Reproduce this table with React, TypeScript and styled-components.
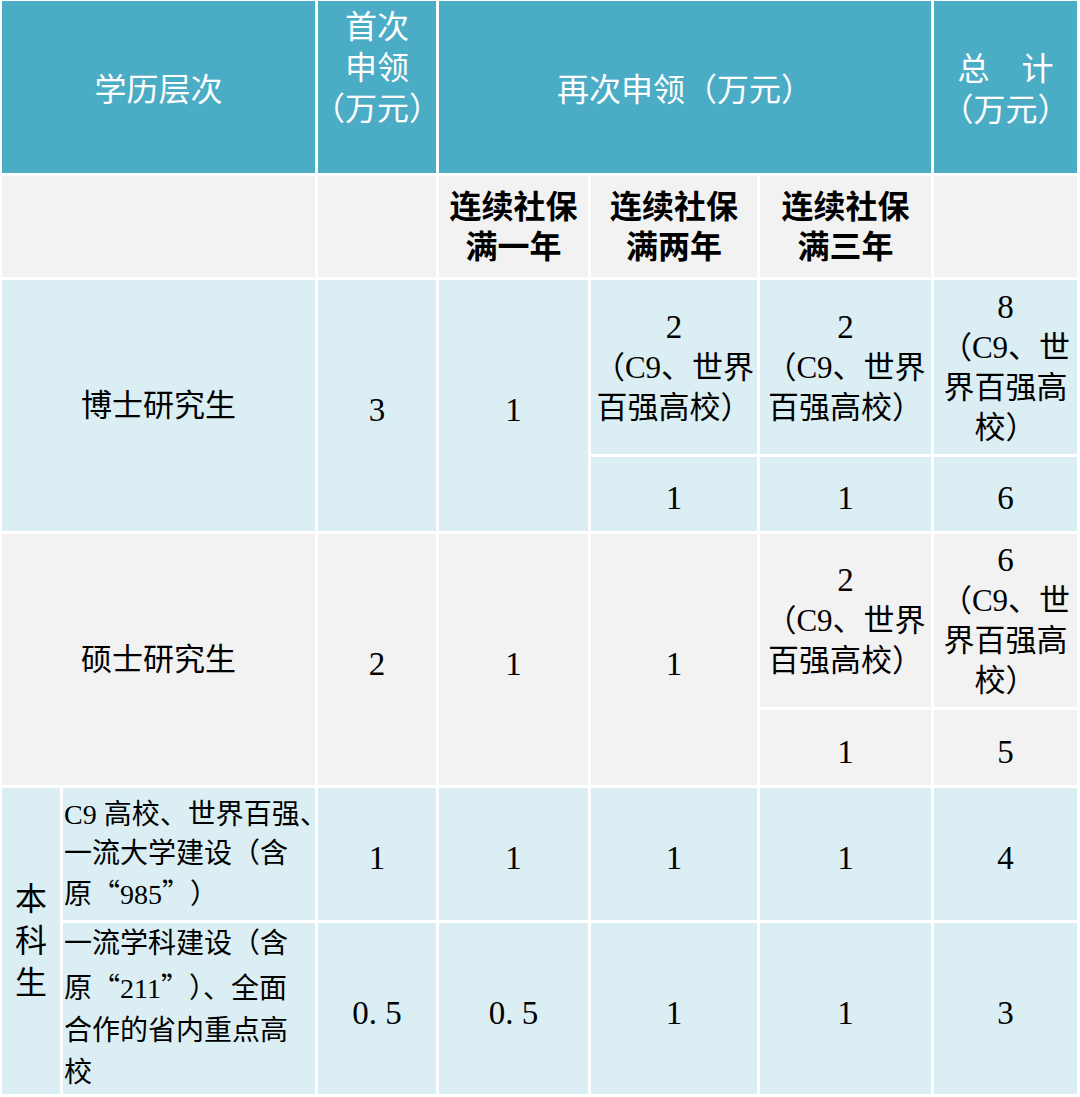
import React from "react";
import styled, { createGlobalStyle } from "styled-components";

const Global = createGlobalStyle`
  html, body { margin: 0; padding: 0; background: #fff; }
  body { font-family: "Liberation Serif", "Noto Sans CJK SC", serif; }
`;

type Tone = "head" | "blue" | "gray";

const bg: Record<Tone, string> = {
  head: "#4BACC6",
  blue: "#DAEEF3",
  gray: "#F2F2F2",
};

const Table = styled.div`
  display: grid;
  grid-template-columns: 58px 252px 118px 149px 166px 171px 143px;
  grid-template-rows: 172px 101px 174px 74px 173px 75px 132px 171px;
  gap: 3px;
  padding: 1px 3px 3px 2px;
  width: 1080px;
  height: 1097px;
  box-sizing: border-box;
  background: #ffffff;
`;

const Cell = styled.div<{ $tone: Tone; $c: string; $r: string; $top?: number }>`
  grid-column: ${(p) => p.$c};
  grid-row: ${(p) => p.$r};
  background: ${(p) => bg[p.$tone]};
  display: flex;
  align-items: ${(p) => (p.$top !== undefined ? "flex-start" : "center")};
  justify-content: center;
  padding-top: ${(p) => p.$top ?? 0}px;
  box-sizing: border-box;
  overflow: visible;
  min-width: 0;
`;

const HeadText = styled.div`
  font-family: "Noto Sans CJK SC", sans-serif;
  font-size: 32px;
  line-height: 41px;
  color: #ffffff;
  text-align: center;
  white-space: nowrap;
`;

const Label = styled.div<{ $bold?: boolean; $size?: number; $lh?: number }>`
  font-family: "Liberation Serif", "Noto Sans CJK SC", serif;
  font-size: ${(p) => p.$size ?? 31}px;
  font-weight: ${(p) => (p.$bold ? 700 : 400)};
  line-height: ${(p) => p.$lh ?? 40}px;
  color: #000;
  text-align: center;
  white-space: nowrap;
`;

const Num = styled.div`
  font-family: "Liberation Serif", serif;
  font-size: 33px;
  line-height: 40px;
  padding-top: 8px;
  color: #000;
  white-space: pre;
`;

const Big = styled.span`
  font-family: "Liberation Serif", serif;
  font-size: 33px;
`;

const SideCell = styled(Cell)`
  justify-content: flex-start;
  padding-left: 1px;
`;

const SideText = styled.div<{ $lh: number }>`
  font-family: "Liberation Serif", "Noto Sans CJK SC", serif;
  font-size: 28px;
  line-height: ${(p) => p.$lh}px;
  color: #000;
  white-space: nowrap;
`;

const Quote = styled.span`
  font-family: "Noto Sans CJK SC", sans-serif;
  display: inline-block;
  width: 1em;
  text-align: center;
`;

const Lines: React.FC<{ lines: React.ReactNode[] }> = ({ lines }) => (
  <>
    {lines.map((l, i) => (
      <React.Fragment key={i}>
        {i > 0 && <br />}
        {l}
      </React.Fragment>
    ))}
  </>
);

const c9Two = [<Big key="n">2</Big>, "（C9、世界", "百强高校）"];
const c9Total = (n: string) => [<Big key="n">{n}</Big>, "（C9、世", "界百强高", "校）"];

export default function App() {
  return (
    <>
      <Global />
      <Table>
        {/* header */}
        <Cell $tone="head" $c="1 / 3" $r="1">
          <HeadText>学历层次</HeadText>
        </Cell>
        <Cell $tone="head" $c="3" $r="1" $top={3}>
          <HeadText>
            <Lines lines={["首次", "申领", "（万元）"]} />
          </HeadText>
        </Cell>
        <Cell $tone="head" $c="4 / 7" $r="1">
          <HeadText>再次申领（万元）</HeadText>
        </Cell>
        <Cell $tone="head" $c="7" $r="1">
          <HeadText>
            <Lines lines={["总\u3000计", "（万元）"]} />
          </HeadText>
        </Cell>

        {/* sub header */}
        <Cell $tone="gray" $c="1 / 3" $r="2" />
        <Cell $tone="gray" $c="3" $r="2" />
        <Cell $tone="gray" $c="4" $r="2">
          <Label $bold $size={32}>
            <Lines lines={["连续社保", "满一年"]} />
          </Label>
        </Cell>
        <Cell $tone="gray" $c="5" $r="2">
          <Label $bold $size={32}>
            <Lines lines={["连续社保", "满两年"]} />
          </Label>
        </Cell>
        <Cell $tone="gray" $c="6" $r="2">
          <Label $bold $size={32}>
            <Lines lines={["连续社保", "满三年"]} />
          </Label>
        </Cell>
        <Cell $tone="gray" $c="7" $r="2" />

        {/* 博士 */}
        <Cell $tone="blue" $c="1 / 3" $r="3 / 5">
          <Label>博士研究生</Label>
        </Cell>
        <Cell $tone="blue" $c="3" $r="3 / 5">
          <Num>3</Num>
        </Cell>
        <Cell $tone="blue" $c="4" $r="3 / 5">
          <Num>1</Num>
        </Cell>
        <Cell $tone="blue" $c="5" $r="3">
          <Label>
            <Lines lines={c9Two} />
          </Label>
        </Cell>
        <Cell $tone="blue" $c="6" $r="3">
          <Label>
            <Lines lines={c9Two} />
          </Label>
        </Cell>
        <Cell $tone="blue" $c="7" $r="3">
          <Label>
            <Lines lines={c9Total("8")} />
          </Label>
        </Cell>
        <Cell $tone="blue" $c="5" $r="4">
          <Num>1</Num>
        </Cell>
        <Cell $tone="blue" $c="6" $r="4">
          <Num>1</Num>
        </Cell>
        <Cell $tone="blue" $c="7" $r="4">
          <Num>6</Num>
        </Cell>

        {/* 硕士 */}
        <Cell $tone="gray" $c="1 / 3" $r="5 / 7">
          <Label>硕士研究生</Label>
        </Cell>
        <Cell $tone="gray" $c="3" $r="5 / 7">
          <Num>2</Num>
        </Cell>
        <Cell $tone="gray" $c="4" $r="5 / 7">
          <Num>1</Num>
        </Cell>
        <Cell $tone="gray" $c="5" $r="5 / 7">
          <Num>1</Num>
        </Cell>
        <Cell $tone="gray" $c="6" $r="5">
          <Label>
            <Lines lines={c9Two} />
          </Label>
        </Cell>
        <Cell $tone="gray" $c="7" $r="5">
          <Label>
            <Lines lines={c9Total("6")} />
          </Label>
        </Cell>
        <Cell $tone="gray" $c="6" $r="6">
          <Num>1</Num>
        </Cell>
        <Cell $tone="gray" $c="7" $r="6">
          <Num>5</Num>
        </Cell>

        {/* 本科 */}
        <Cell $tone="blue" $c="1" $r="7 / 9">
          <Label $size={32} $lh={42}>
            <Lines lines={["本", "科", "生"]} />
          </Label>
        </Cell>
        <SideCell $tone="blue" $c="2" $r="7">
          <SideText $lh={39}>
            <Lines
              lines={[
                "C9 高校、世界百强、",
                "一流大学建设（含",
                <>
                  原<Quote>“</Quote>985<Quote>”</Quote>）
                </>,
              ]}
            />
          </SideText>
        </SideCell>
        <Cell $tone="blue" $c="3" $r="7">
          <Num>1</Num>
        </Cell>
        <Cell $tone="blue" $c="4" $r="7">
          <Num>1</Num>
        </Cell>
        <Cell $tone="blue" $c="5" $r="7">
          <Num>1</Num>
        </Cell>
        <Cell $tone="blue" $c="6" $r="7">
          <Num>1</Num>
        </Cell>
        <Cell $tone="blue" $c="7" $r="7">
          <Num>4</Num>
        </Cell>

        <SideCell $tone="blue" $c="2" $r="8">
          <SideText $lh={42}>
            <Lines
              lines={[
                "一流学科建设（含",
                <>
                  原<Quote>“</Quote>211<Quote>”</Quote>）、全面
                </>,
                "合作的省内重点高",
                "校",
              ]}
            />
          </SideText>
        </SideCell>
        <Cell $tone="blue" $c="3" $r="8">
          <Num>0. 5</Num>
        </Cell>
        <Cell $tone="blue" $c="4" $r="8">
          <Num>0. 5</Num>
        </Cell>
        <Cell $tone="blue" $c="5" $r="8">
          <Num>1</Num>
        </Cell>
        <Cell $tone="blue" $c="6" $r="8">
          <Num>1</Num>
        </Cell>
        <Cell $tone="blue" $c="7" $r="8">
          <Num>3</Num>
        </Cell>
      </Table>
    </>
  );
}
